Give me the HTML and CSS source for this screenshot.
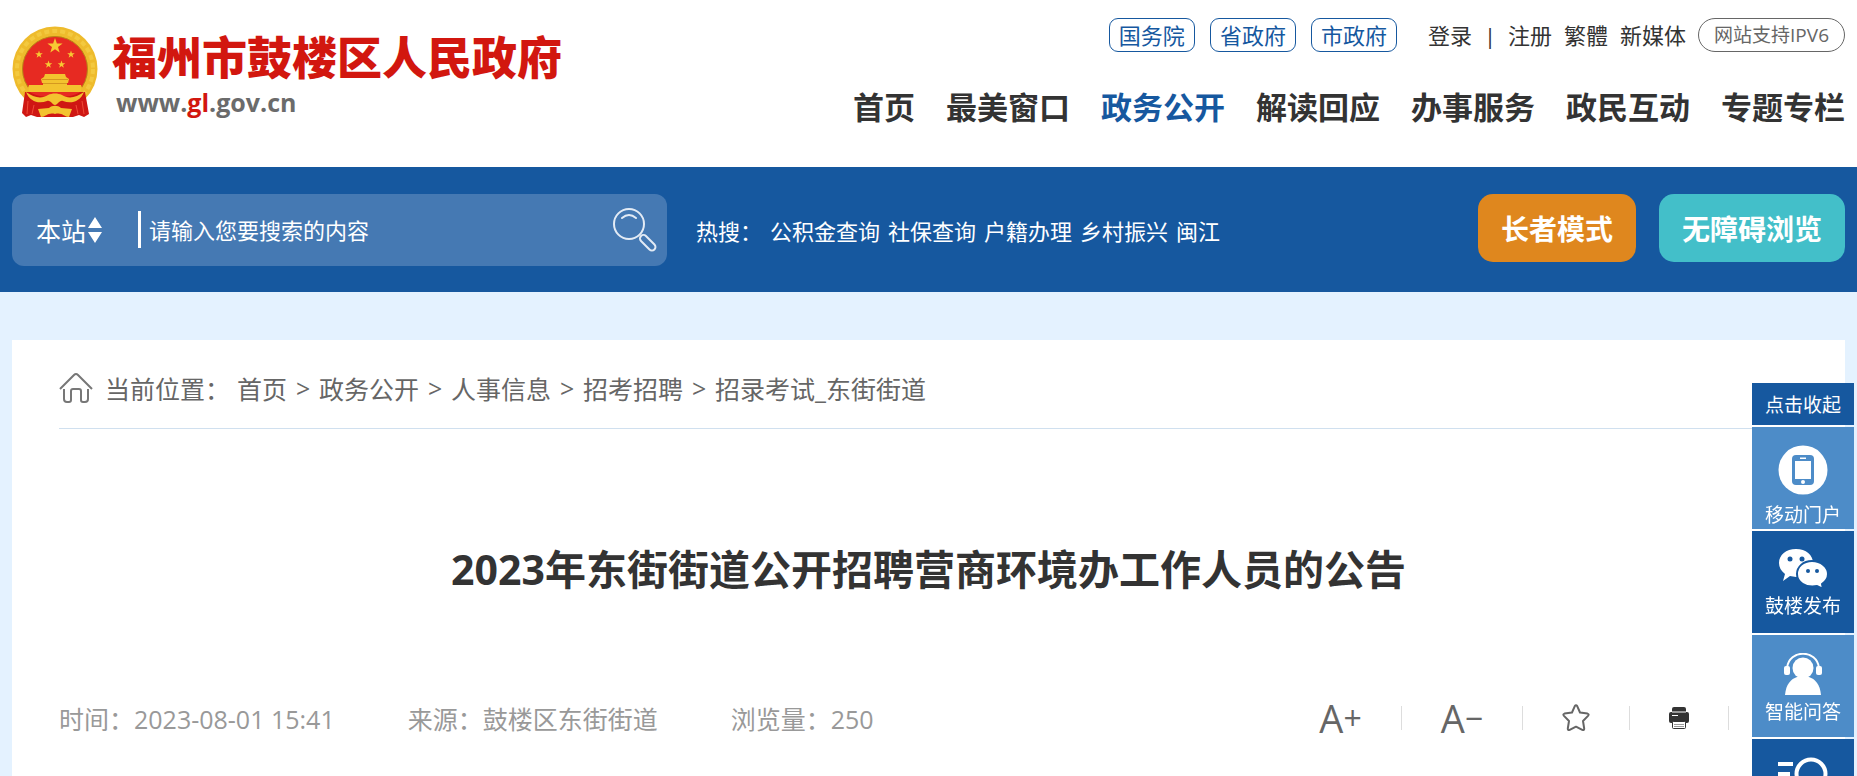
FILE: index.html
```html
<!DOCTYPE html>
<html lang="zh-CN">
<head>
    <meta charset="UTF-8">
    <meta name="viewport" content="width=device-width, initial-scale=1.0">
    <title>2023年东街街道公开招聘营商环境办工作人员的公告</title>
    <link rel="stylesheet" href="styles.css">
</head>
<body>

<header class="header">
    <a class="logo" href="#">
        <svg class="emblem" width="86" height="92" viewBox="0 0 86 92">
            <!-- 金环 -->
            <ellipse cx="43" cy="43" rx="42.500" ry="42.500" fill="#eebb2c"></ellipse>
            <ellipse cx="43" cy="43" rx="38" ry="38" fill="none" stroke="#f3c93f" stroke-width="4" stroke-dasharray="5 3"></ellipse>
            <circle cx="43" cy="43" r="32.500" fill="#e72a22" stroke="#b98616" stroke-width="1"></circle>
            <!-- 五星 -->
            <g fill="#f7c933">
                <path id="star" d="M43,12 L44.900,17.600 L50.600,17.600 L46,21 L47.700,26.500 L43,23.200 L38.300,26.500 L40,21 L35.400,17.600 L41.100,17.600 Z"></path>
                <use href="#star" transform="translate(5.500 18.500) scale(.5)"></use>
                <use href="#star" transform="translate(37.500 18.500) scale(.5)"></use>
                <use href="#star" transform="translate(15 28.500) scale(.5)"></use>
                <use href="#star" transform="translate(28 28.500) scale(.5)"></use>
            </g>
            <!-- 城楼 -->
            <path fill="#f3c32f" d="M33,48 L53,48 L54,51 L57,53 L56,57 L55,57 L55,59 L69,59 L70,62 L68,66 L18,66 L16,62 L17,59 L31,59 L31,57 L30,57 L29,53 L32,51 Z"></path>
            <path stroke="#d5981f" d="M30,53.500 L56,53.500 M31,57.500 L55,57.500"></path>
            <!-- 红绸 -->
            <path fill="#cf1713" d="M13,66 L73,66 L77,88 L72,91 L67,89 L61,91 L25,91 L19,89 L14,91 L10,87 Z"></path>
            <path fill="#e72a22" d="M18,66 L68,66 C60,73 26,73 18,66 Z"></path>
            <path stroke="#f04a37" fill="none" d="M16,75 L15,88 M22,79 L20,88 M70,75 L72,88 M64,79 L66,88"></path>
            <path fill="#f3c32f" d="M14,66 C22,72 30,73 36,69 C40,67 46,67 50,69 C56,73 64,72 72,66 C68,76 59,78 51,75 C47,74 46,79 43,79 C40,79 39,74 35,75 C27,78 18,76 14,66 Z"></path>
            <path fill="#f3c32f" d="M26,83 L37,82 C40,79 46,79 49,82 L60,83 L57,91 C52,91 50,86 43,88 C36,86 34,91 29,91 Z"></path>
        </svg>
        <span class="logo-text">
            <strong class="logo-name">福州市鼓楼区人民政府</strong>
            <span class="logo-url">www.<em>gl</em>.gov.cn</span>
        </span>
    </a>
    <div class="header-right">
        <div class="top-links">
            <a class="gov" href="#">国务院</a>
            <a class="gov" href="#">省政府</a>
            <a class="gov" href="#">市政府</a>
            <span class="login"><a href="#">登录</a><i>|</i><a href="#">注册</a></span>
            <a href="#">繁體</a>
            <a href="#">新媒体</a>
            <a class="ipv6" href="#">网站支持IPV6</a>
        </div>
        <nav class="nav">
            <a href="#">首页</a>
            <a href="#">最美窗口</a>
            <a class="active" href="#">政务公开</a>
            <a href="#">解读回应</a>
            <a href="#">办事服务</a>
            <a href="#">政民互动</a>
            <a href="#">专题专栏</a>
        </nav>
    </div>
</header>

<div class="banner">
    <form class="search">
        <button class="scope" type="button">本站
            <svg width="14" height="26" viewBox="0 0 14 26" fill="#fff"><path d="M7,0 L14,11 L0,11 Z M0,15 L14,15 L7,26 Z"></path></svg>
        </button>
        <input class="keyword" type="text" aria-label="搜索" placeholder="请输入您要搜索的内容">
        <button class="search-btn" type="submit" aria-label="搜索">
            <svg width="44" height="44" viewBox="0 0 44 44" fill="none" stroke="#e3ebf5" stroke-width="2">
                <circle cx="16" cy="16" r="15"></circle>
                <path d="M9,10 Q16,4 23,10" stroke-linecap="round"></path>
                <rect x="-3.500" y="0" width="7" height="19" rx="3.500" transform="translate(28 28) rotate(-45)"></rect>
            </svg>
        </button>
    </form>
    <div class="hot">
        <span>热搜：</span>
        <a href="#">公积金查询</a>
        <a href="#">社保查询</a>
        <a href="#">户籍办理</a>
        <a href="#">乡村振兴</a>
        <a href="#">闽江</a>
    </div>
    <div class="modes">
        <button class="mode elder" type="button">长者模式</button>
        <button class="mode barrier" type="button">无障碍浏览</button>
    </div>
</div>

<main class="content">
    <div class="crumbs">
        <svg width="34" height="30" viewBox="0 0 34 30" fill="none" stroke="#777" stroke-width="2">
            <path d="M1,16 L15,2 Q17,0 19,2 L33,16"></path>
            <path d="M5,16 L5,26 Q5,29 8,29 L10,29 Q12,29 12,27 L12,18 Q12,16 14,16 L20,16 Q22,16 22,18 L22,27 Q22,29 24,29 L26,29 Q29,29 29,26 L29,16"></path>
        </svg>
        <span class="crumbs-label">当前位置：</span>
        <a href="#">首页</a><i>&gt;</i><a href="#">政务公开</a><i>&gt;</i><a href="#">人事信息</a><i>&gt;</i><a href="#">招考招聘</a><i>&gt;</i><a href="#">招录考试_东街街道</a>
    </div>

    <h1 class="title">2023年东街街道公开招聘营商环境办工作人员的公告</h1>

    <div class="meta">
        <div class="info">
            <span>时间：2023-08-01 15:41</span>
            <span>来源：鼓楼区东街街道</span>
            <span>浏览量：250</span>
        </div>
        <div class="tools">
            <button type="button" aria-label="放大字体">A<small>+</small></button>
            <button type="button" aria-label="缩小字体">A<small>−</small></button>
            <button type="button" aria-label="收藏">
                <svg width="28" height="28" viewBox="0 0 28 28" fill="none" stroke="#666" stroke-width="2" stroke-linejoin="round">
                    <path d="M12.800,2.200 Q14,0.500 15.200,2.200 L18,8.500 L25.500,9.600 Q27.500,10.200 26,11.900 L21,17 L22.200,24.500 Q22.300,26.600 20.300,25.900 L14,22.700 L7.700,25.900 Q5.700,26.600 5.800,24.500 L7,17 L2,11.900 Q0.500,10.200 2.500,9.600 L10,8.500 Z"></path>
                </svg>
            </button>
            <button type="button" aria-label="打印">
                <svg width="20" height="22" viewBox="0 0 20 22">
                    <path fill="#333" d="M5,0 L15,0 Q17,0 17,2 L17,4 L3,4 L3,2 Q3,0 5,0 Z"></path>
                    <rect y="5" width="20" height="11" rx="2" fill="#333"></rect>
                    <path fill="#999" d="M3,4 L17,4 L17,6 L3,6 Z"></path>
                    <path stroke="#fff" d="M3,8.500 L9,8.500"></path>
                    <rect x="3.500" y="14.500" width="13" height="7" rx="1" fill="#fff" stroke="#333"></rect>
                    <path stroke="#999" d="M5,17.500 L15,17.500 M5,19.500 L15,19.500"></path>
                </svg>
            </button>
        </div>
    </div>
</main>

<!-- 右侧浮动栏 -->
<aside class="side">
    <button class="side-toggle" type="button">点击收起</button>
    <a class="side-item light" href="#">
        <svg width="50" height="53" viewBox="0 0 50 53">
            <circle cx="25" cy="25" r="24.500" fill="#fff"></circle>
            <rect x="14" y="10" width="22" height="30" rx="4" fill="#4d8cc8"></rect>
            <path fill="#fff" d="M17,16 L33,16 L33,34 L17,34 Z M22,12.500 L28,12.500 L28,14 L22,14 Z"></path>
            <circle cx="25" cy="37" r="2" fill="#fff"></circle>
        </svg>
        <span>移动门户</span>
    </a>
    <a class="side-item" href="#">
        <svg width="50" height="40" viewBox="0 0 50 40">
            <path fill="#fff" d="M18,0 C28,0 35,6 35,14 C35,23 28,28 18,28 L12,27 L5,32 L7,25 C3,22 1,18 1,14 C1,6 8,0 18,0 Z"></path>
            <path fill="#fff" stroke="#16589f" stroke-width="2" d="M34,12 C43,12 50,18 50,25 C50,30 47,33 44,35 L45,40 L39,37 C27,39 19,33 19,25 C19,18 25,12 34,12 Z"></path>
            <g fill="#16589f"><circle cx="12" cy="10" r="2.500"></circle><circle cx="24" cy="10" r="2.500"></circle><circle cx="30" cy="22" r="2"></circle><circle cx="39" cy="22" r="2"></circle></g>
        </svg>
        <span>鼓楼发布</span>
    </a>
    <a class="side-item light" href="#">
        <svg width="38" height="42" viewBox="0 0 38 42" fill="#fff">
            <path fill="none" stroke="#fff" stroke-width="2" d="M3,15 C5,-4 33,-4 35,15"></path>
            <rect x="0" y="13" width="6" height="9" rx="2"></rect>
            <rect x="32" y="13" width="6" height="9" rx="2"></rect>
            <circle cx="19" cy="15" r="10.500"></circle>
            <path d="M1,42 C2,31 7,26 13,24 L25,24 C31,26 36,31 37,42 Z"></path>
        </svg>
        <span>智能问答</span>
    </a>
    <a class="side-item" href="#" aria-label="信息检索">
        <svg width="50" height="40" viewBox="0 0 50 40" fill="none" stroke="#fff" stroke-width="4">
            <path d="M0,7 L15,7 M0,17 L12,17 M0,27 L15,27"></path>
            <circle cx="33" cy="17" r="14.500"></circle>
            <path d="M43,28 L50,36"></path>
        </svg>
    </a>
</aside>

</body>
</html>
```
FILE: styles.css
```css
* {
    box-sizing: border-box;
}
body {
    margin: 0;
    min-height: 100vh;
    display: flex;
    flex-direction: column;
    background-color: #e4f2ff;
    color: #333;
    font-family: "Open Sans", "Noto Sans CJK SC", sans-serif;
    font-size: 22px;
}
a {
    color: inherit;
    text-decoration: none;
}
i, em {
    font-style: normal;
}
svg {
    flex: none;
    display: block;
}
button {
    margin: 0;
    padding: 0;
    border: 0;
    background: none;
    color: inherit;
    font: inherit;
    cursor: pointer;
}

/* 页头 */
.header {
    display: flex;
    justify-content: space-between;
    padding: 18px 12px 37px;
    background-color: #fff;
}
.logo {
    display: flex;
    padding-top: 8px;
    gap: 14px;
}
.logo-text {
    display: flex;
    flex-direction: column;
    padding-top: 8px;
}
.logo-name {
    font-size: 45px;
    font-weight: 900;
    line-height: 48px;
    color: #d2170f;
}
.logo-url {
    padding-left: 4px;
    font-size: 25px;
    font-weight: bold;
    line-height: 40px;
    color: #6b6b6b;
}
.logo-url em {
    color: #d2170f;
}
.header-right {
    display: flex;
    flex-direction: column;
    align-items: flex-end;
    gap: 32px;
}
.top-links {
    display: flex;
    align-items: center;
    gap: 12px;
    line-height: 34px;
}
.gov {
    margin-right: 3px;
    padding: 0 9px;
    border: 1px solid #16589f;
    border-radius: 9px;
    line-height: 32px;
    color: #16589f;
}
.login {
    display: flex;
    gap: 12px;
    margin-left: 16px;
}
.ipv6 {
    padding: 0 15px;
    border: 1px solid #666;
    border-radius: 17px;
    font-size: 19px;
    line-height: 32px;
    color: #666;
}
.nav {
    display: flex;
    gap: 31px;
    font-size: 31px;
    font-weight: bold;
    line-height: 46px;
}
.nav .active {
    color: #16589f;
}

/* 搜索栏 */
.banner {
    display: flex;
    align-items: center;
    height: 125px;
    padding: 0 12px;
    background-color: #16589f;
    color: #fff;
}
.search {
    display: flex;
    align-items: center;
    width: 655px;
    height: 72px;
    padding: 0 10px 0 24px;
    border-radius: 12px;
    background-color: #4579b3;
}
.scope {
    display: flex;
    align-items: center;
    gap: 2px;
    width: 102px;
    font-size: 25px;
}
.keyword {
    flex: 1;
    min-width: 0;
    height: 37px;
    padding: 0 8px;
    border: 0;
    border-left: 3px solid #fff;
    outline: 0;
    background: none;
    color: #fff;
    font: inherit;
}
.keyword::placeholder {
    color: #fff;
    opacity: 1;
}
.hot {
    display: flex;
    gap: 8px;
    margin-left: 29px;
}
.modes {
    display: flex;
    gap: 23px;
    margin: 0 0 4px auto;
}
.mode {
    height: 68px;
    padding: 0 23px;
    border-radius: 15px;
    font-size: 28px;
    font-weight: bold;
}
.elder {
    background-color: #df871e;
}
.barrier {
    background-color: #43bfc9;
}

/* 正文 */
.content {
    flex: 1;
    margin: 48px 12px 0;
    padding: 0 47px;
    background-color: #fff;
}
.crumbs {
    display: flex;
    align-items: center;
    height: 89px;
    padding-top: 7px;
    border-bottom: 1px solid #d0e0ef;
    font-size: 25px;
    color: #666;
}
.crumbs i {
    width: 32px;
    text-align: center;
}
.crumbs-label {
    margin: 0 7px 0 12px;
}
.title {
    margin: 110px 0 84px;
    font-size: 41px;
    line-height: 60px;
    text-align: center;
}
.meta {
    display: flex;
    justify-content: space-between;
    align-items: center;
    height: 70px;
}
.info {
    display: flex;
    gap: 73px;
    font-size: 25px;
    color: #999;
}
.tools {
    display: flex;
    align-items: center;
    margin-right: 69px;
}
.tools button {
    display: flex;
    align-items: center;
    height: 24px;
    padding: 0 39px;
    border-right: 1px solid #ddd;
    font-size: 38px;
    line-height: 24px;
    color: #666;
}
.tools small {
    font-size: 32px;
}

/* 右侧浮动栏 */
.side {
    position: fixed;
    top: 383px;
    right: 3px;
    display: flex;
    flex-direction: column;
    gap: 2px;
    width: 102px;
    font-size: 19px;
    color: #fff;
}
.side-toggle {
    height: 42px;
    background-color: #16589f;
}
.side-item {
    display: flex;
    flex-direction: column;
    align-items: center;
    height: 102px;
    padding-top: 18px;
    background-color: #16589f;
    line-height: 34px;
}
.side-item.light {
    background-color: #4d8cc8;
}
```
